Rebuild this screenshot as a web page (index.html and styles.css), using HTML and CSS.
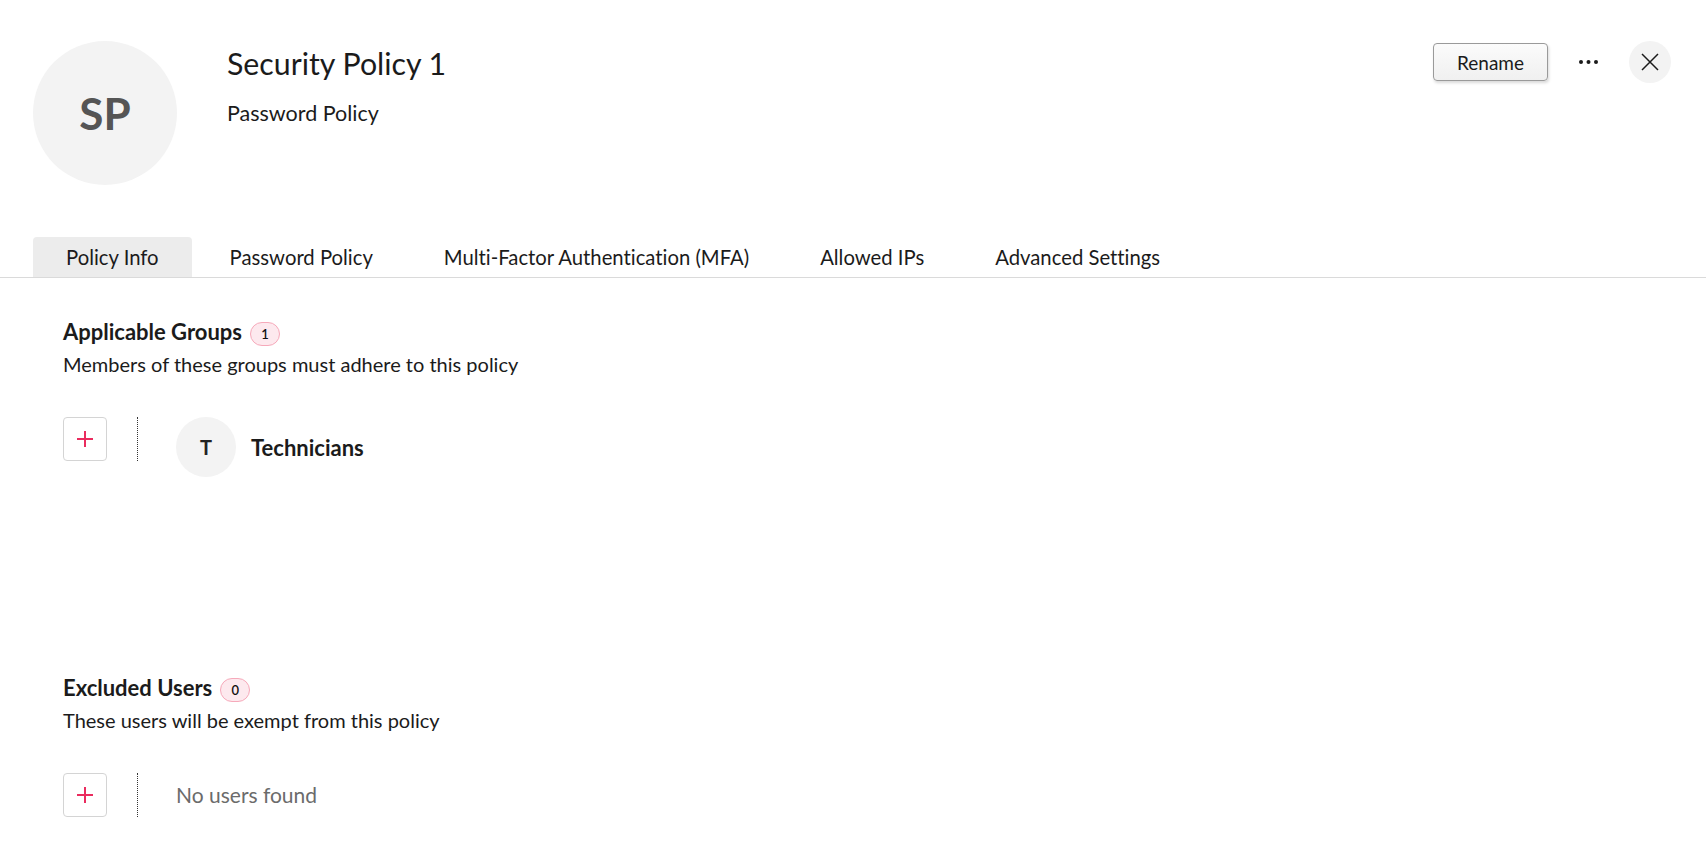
FILE: index.html
```html
<!DOCTYPE html>
<html>
    <head>
        <title>Security Policy 1</title>
        <link rel="stylesheet" href="styles.css">
    </head>
<body>
    <div class="policy-page">
        <div class="policy-header">
            <div class="avatar">SP</div>
            <div class="title-block">
                <div class="policy-name">Security Policy 1</div>
                <div class="policy-type">Password Policy</div>
            </div>
            <div class="actions">
                <button class="btn-rename">Rename</button>
                <div class="more" title="More">
                    <svg width="19" height="4" viewBox="0 0 19 4"><circle cx="2" cy="2" r="2"/><circle cx="9.5" cy="2" r="2"/><circle cx="17" cy="2" r="2"/></svg>
                </div>
                <div class="close" title="Close">
                    <svg width="18" height="18" viewBox="0 0 18 18"><path d="M1 1 L17 17 M17 1 L1 17"/></svg>
                </div>
            </div>
        </div>

        <div class="tabs">
            <div class="tab active">Policy Info</div>
            <div class="tab">Password Policy</div>
            <div class="tab">Multi-Factor Authentication (MFA)</div>
            <div class="tab">Allowed IPs</div>
            <div class="tab">Advanced Settings</div>
        </div>

        <div class="section groups">
            <div class="section-title">
                <span>Applicable Groups</span>
                <span class="count">1</span>
            </div>
            <div class="section-desc">Members of these groups must adhere to this policy</div>
            <div class="member-row">
                <div class="add-btn"><span class="plus"></span></div>
                <div class="divider"></div>
                <div class="member">
                    <div class="member-avatar">T</div>
                    <div class="member-name">Technicians</div>
                </div>
            </div>
        </div>

        <div class="section excluded">
            <div class="section-title">
                <span>Excluded Users</span>
                <span class="count">0</span>
            </div>
            <div class="section-desc">These users will be exempt from this policy</div>
            <div class="member-row">
                <div class="add-btn"><span class="plus"></span></div>
                <div class="divider"></div>
                <div class="empty">No users found</div>
            </div>
        </div>
    </div>
</body>
</html>
```

FILE: styles.css
```css
body {
    margin: 0;
    font-family: Lato, "Open Sans", sans-serif;
    font-variant-ligatures: none;
    color: #1b1b1b;
    background: #fff;
}

.policy-header {
    display: flex;
    padding: 41px 35px 0 33px;
}

.avatar {
    width: 144px;
    height: 144px;
    border-radius: 50%;
    background-color: #f3f3f3;
    color: #555;
    font-size: 44px;
    font-weight: bold;
    display: flex;
    align-items: center;
    justify-content: center;
    flex-shrink: 0;
}

.title-block {
    margin-left: 50px;
    padding-top: 4px;
}

.policy-name {
    font-size: 30.3px;
    line-height: 36px;
}

.policy-type {
    font-size: 21.5px;
    line-height: 26px;
    margin-top: 19px;
}

.actions {
    margin-left: auto;
    display: flex;
    align-items: center;
    gap: 31px;
    height: 42px;
}

.btn-rename {
    font-family: inherit;
    font-size: 19px;
    color: #1b1b1b;
    width: 115px;
    height: 38px;
    padding: 0;
    border: 1px solid #9a9a9a;
    border-radius: 4px;
    background: linear-gradient(#fbfbfb, #f0f0f0);
    box-shadow: 1px 2px 3px rgba(0, 0, 0, 0.15);
    cursor: pointer;
}

.more {
    display: flex;
    fill: #1b1b1b;
    cursor: pointer;
}

.close {
    width: 42px;
    height: 42px;
    border-radius: 50%;
    background-color: #f3f3f3;
    display: flex;
    align-items: center;
    justify-content: center;
    cursor: pointer;
}

.close svg {
    stroke: #1b1b1b;
    stroke-width: 1.5;
}

.tabs {
    display: flex;
    gap: 5px;
    margin-top: 52px;
    padding-left: 33px;
    border-bottom: 1px solid #dadada;
}

.tab {
    padding: 0 33px;
    height: 40px;
    line-height: 40px;
    font-size: 20.3px;
    border-radius: 4px 4px 0 0;
    cursor: pointer;
}

.tab.active {
    background-color: #ececec;
}

.section {
    padding-left: 63px;
}

.groups {
    margin-top: 41px;
    min-height: 356px;
}

.section-title {
    display: flex;
    align-items: center;
    gap: 8px;
    height: 26px;
    font-size: 22px;
    font-weight: bold;
    line-height: 26px;
}

.count {
    display: inline-block;
    min-width: 28px;
    height: 22px;
    line-height: 22px;
    margin-top: 4px;
    border: 1px solid #f6a9ba;
    border-radius: 12px;
    background-color: #fde9ee;
    font-size: 13px;
    font-weight: 600;
    text-align: center;
    color: #111;
}

.section-desc {
    font-size: 20px;
    line-height: 24px;
    margin-top: 7px;
}

.member-row {
    display: flex;
    align-items: flex-start;
    margin-top: 41px;
}

.add-btn {
    width: 42px;
    height: 42px;
    border: 1px solid #d4d4d4;
    border-radius: 4px;
    position: relative;
    cursor: pointer;
}

.plus::before,
.plus::after {
    content: "";
    position: absolute;
    background-color: #ea2c5e;
    left: 50%;
    top: 50%;
    transform: translate(-50%, -50%);
}

.plus::before {
    width: 16px;
    height: 2px;
}

.plus::after {
    width: 2px;
    height: 16px;
}

.divider {
    width: 0;
    height: 44px;
    border-left: 1px dotted #333;
    margin-left: 30px;
}

.member {
    display: flex;
    align-items: center;
    margin-left: 38px;
}

.member-avatar {
    width: 60px;
    height: 60px;
    border-radius: 50%;
    background-color: #f3f3f3;
    display: flex;
    align-items: center;
    justify-content: center;
    font-size: 20px;
    font-weight: bold;
    color: #222;
}

.member-name {
    margin-left: 15px;
    font-size: 22px;
    font-weight: bold;
}

.empty {
    margin-left: 38px;
    height: 44px;
    line-height: 44px;
    font-size: 21px;
    color: #6b6b6b;
}
```
